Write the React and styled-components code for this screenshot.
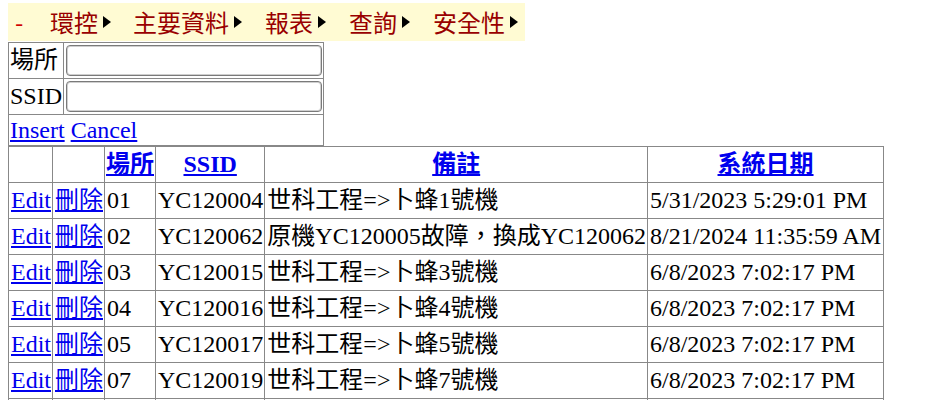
import React from 'react';
import styled, { createGlobalStyle } from 'styled-components';

const GlobalStyle = createGlobalStyle`
  html, body { margin: 0; padding: 0; background: #fff; }
  body {
    font-family: "Liberation Serif", "Noto Sans CJK TC", serif;
    font-size: 24px;
    color: #000;
  }
  a { color: #0000ee; text-decoration: underline; }
`;

const Page = styled.div`
  padding: 3px 8px 0;
`;

const MenuBar = styled.div`
  display: inline-flex;
  align-items: center;
  height: 38px;
  margin-bottom: 1px;
  padding: 0 7px 0 7px;
  background: #fffbd3;
  font-family: "Noto Sans CJK TC", sans-serif;
  font-size: 24px;
  line-height: 30px;
  color: #990000;
  vertical-align: top;
`;

const Dash = styled.span`
  color: #d00000;
  width: 35px;
`;

const MenuItem = styled.span`
  display: inline-flex;
  align-items: center;
  margin-left: ${(p) => p.$gap}px;
  white-space: nowrap;
`;

const ArrowSvg = styled.svg`
  margin-left: 5px;
  display: block;
`;

const Arrow = () => (
  <ArrowSvg width="8" height="12" viewBox="0 0 8 12">
    <polygon points="0,0 8,6 0,12" fill="#000" />
  </ArrowSvg>
);

const Block = styled.div`
  display: block;
`;

const FormTable = styled.table`
  border-collapse: collapse;
  border: 1px solid #888;
`;

const FormCell = styled.td`
  border: 1px solid #888;
  padding: 1px;
  line-height: ${(p) => p.$lh || 33}px;
  white-space: nowrap;
  vertical-align: middle;
`;

const TextInput = styled.input`
  display: block;
  box-sizing: border-box;
  width: 256px;
  height: 31px;
  margin: 0 0 0 1px;
  border: 1px solid #7a7a7a;
  box-shadow: inset 0 0 0 1px #cfcfcf;
  border-radius: 4px;
  background: #fff;
  font: inherit;
  font-size: 16px;
  padding: 1px 3px;
`;

const LinkGap = styled.span`
  margin-left: 6px;
`;

const Grid = styled.table`
  border-collapse: collapse;
  border: 1px solid #888;
`;

const HeadCell = styled.th`
  border: 1px solid #888;
  padding: 1px;
  width: ${(p) => p.$w}px;
  line-height: 33px;
  white-space: nowrap;
  text-align: center;
  font-weight: bold;
`;

const Cell = styled.td`
  border: 1px solid #888;
  padding: 1px 1px 1px 2px;
  line-height: 33px;
  white-space: nowrap;
  vertical-align: middle;
`;

const menu = [
  { label: '環控', gap: 0 },
  { label: '主要資料', gap: 22 },
  { label: '報表', gap: 23 },
  { label: '查詢', gap: 23 },
  { label: '安全性', gap: 23 },
];

const headers = [
  { key: 'e', w: 40, label: null },
  { key: 'd', w: 48, label: null },
  { key: 'p', w: 48, label: '場所' },
  { key: 's', w: 105, label: 'SSID' },
  { key: 'n', w: 379, label: '備註' },
  { key: 't', w: 233, label: '系統日期' },
];

const rows = [
  ['01', 'YC120004', '世科工程=>卜蜂1號機', '5/31/2023 5:29:01 PM'],
  ['02', 'YC120062', '原機YC120005故障，換成YC120062', '8/21/2024 11:35:59 AM'],
  ['03', 'YC120015', '世科工程=>卜蜂3號機', '6/8/2023 7:02:17 PM'],
  ['04', 'YC120016', '世科工程=>卜蜂4號機', '6/8/2023 7:02:17 PM'],
  ['05', 'YC120017', '世科工程=>卜蜂5號機', '6/8/2023 7:02:17 PM'],
  ['07', 'YC120019', '世科工程=>卜蜂7號機', '6/8/2023 7:02:17 PM'],
  ['08', 'YC120020', '世科工程=>卜蜂8號機', '6/8/2023 7:02:17 PM'],
];

export default function App() {
  return (
    <>
      <GlobalStyle />
      <Page>
        <MenuBar>
          <Dash>-</Dash>
          {menu.map((m) => (
            <MenuItem key={m.label} $gap={m.gap}>
              {m.label}
              <Arrow />
            </MenuItem>
          ))}
        </MenuBar>
        <Block>
          <FormTable>
            <tbody>
              <tr>
                <FormCell>場所</FormCell>
                <FormCell><TextInput type="text" /></FormCell>
              </tr>
              <tr>
                <FormCell>SSID</FormCell>
                <FormCell><TextInput type="text" /></FormCell>
              </tr>
              <tr>
                <FormCell colSpan={2} $lh={28}>
                  <a href="#">Insert</a>
                  <LinkGap />
                  <a href="#">Cancel</a>
                </FormCell>
              </tr>
            </tbody>
          </FormTable>
        </Block>
        <Grid>
          <thead>
            <tr>
              {headers.map((h) => (
                <HeadCell key={h.key} $w={h.w}>
                  {h.label ? <a href="#">{h.label}</a> : '\u00a0'}
                </HeadCell>
              ))}
            </tr>
          </thead>
          <tbody>
            {rows.map((r) => (
              <tr key={r[0]}>
                <Cell><a href="#">Edit</a></Cell>
                <Cell><a href="#">刪除</a></Cell>
                <Cell>{r[0]}</Cell>
                <Cell>{r[1]}</Cell>
                <Cell>{r[2]}</Cell>
                <Cell>{r[3]}</Cell>
              </tr>
            ))}
          </tbody>
        </Grid>
      </Page>
    </>
  );
}
